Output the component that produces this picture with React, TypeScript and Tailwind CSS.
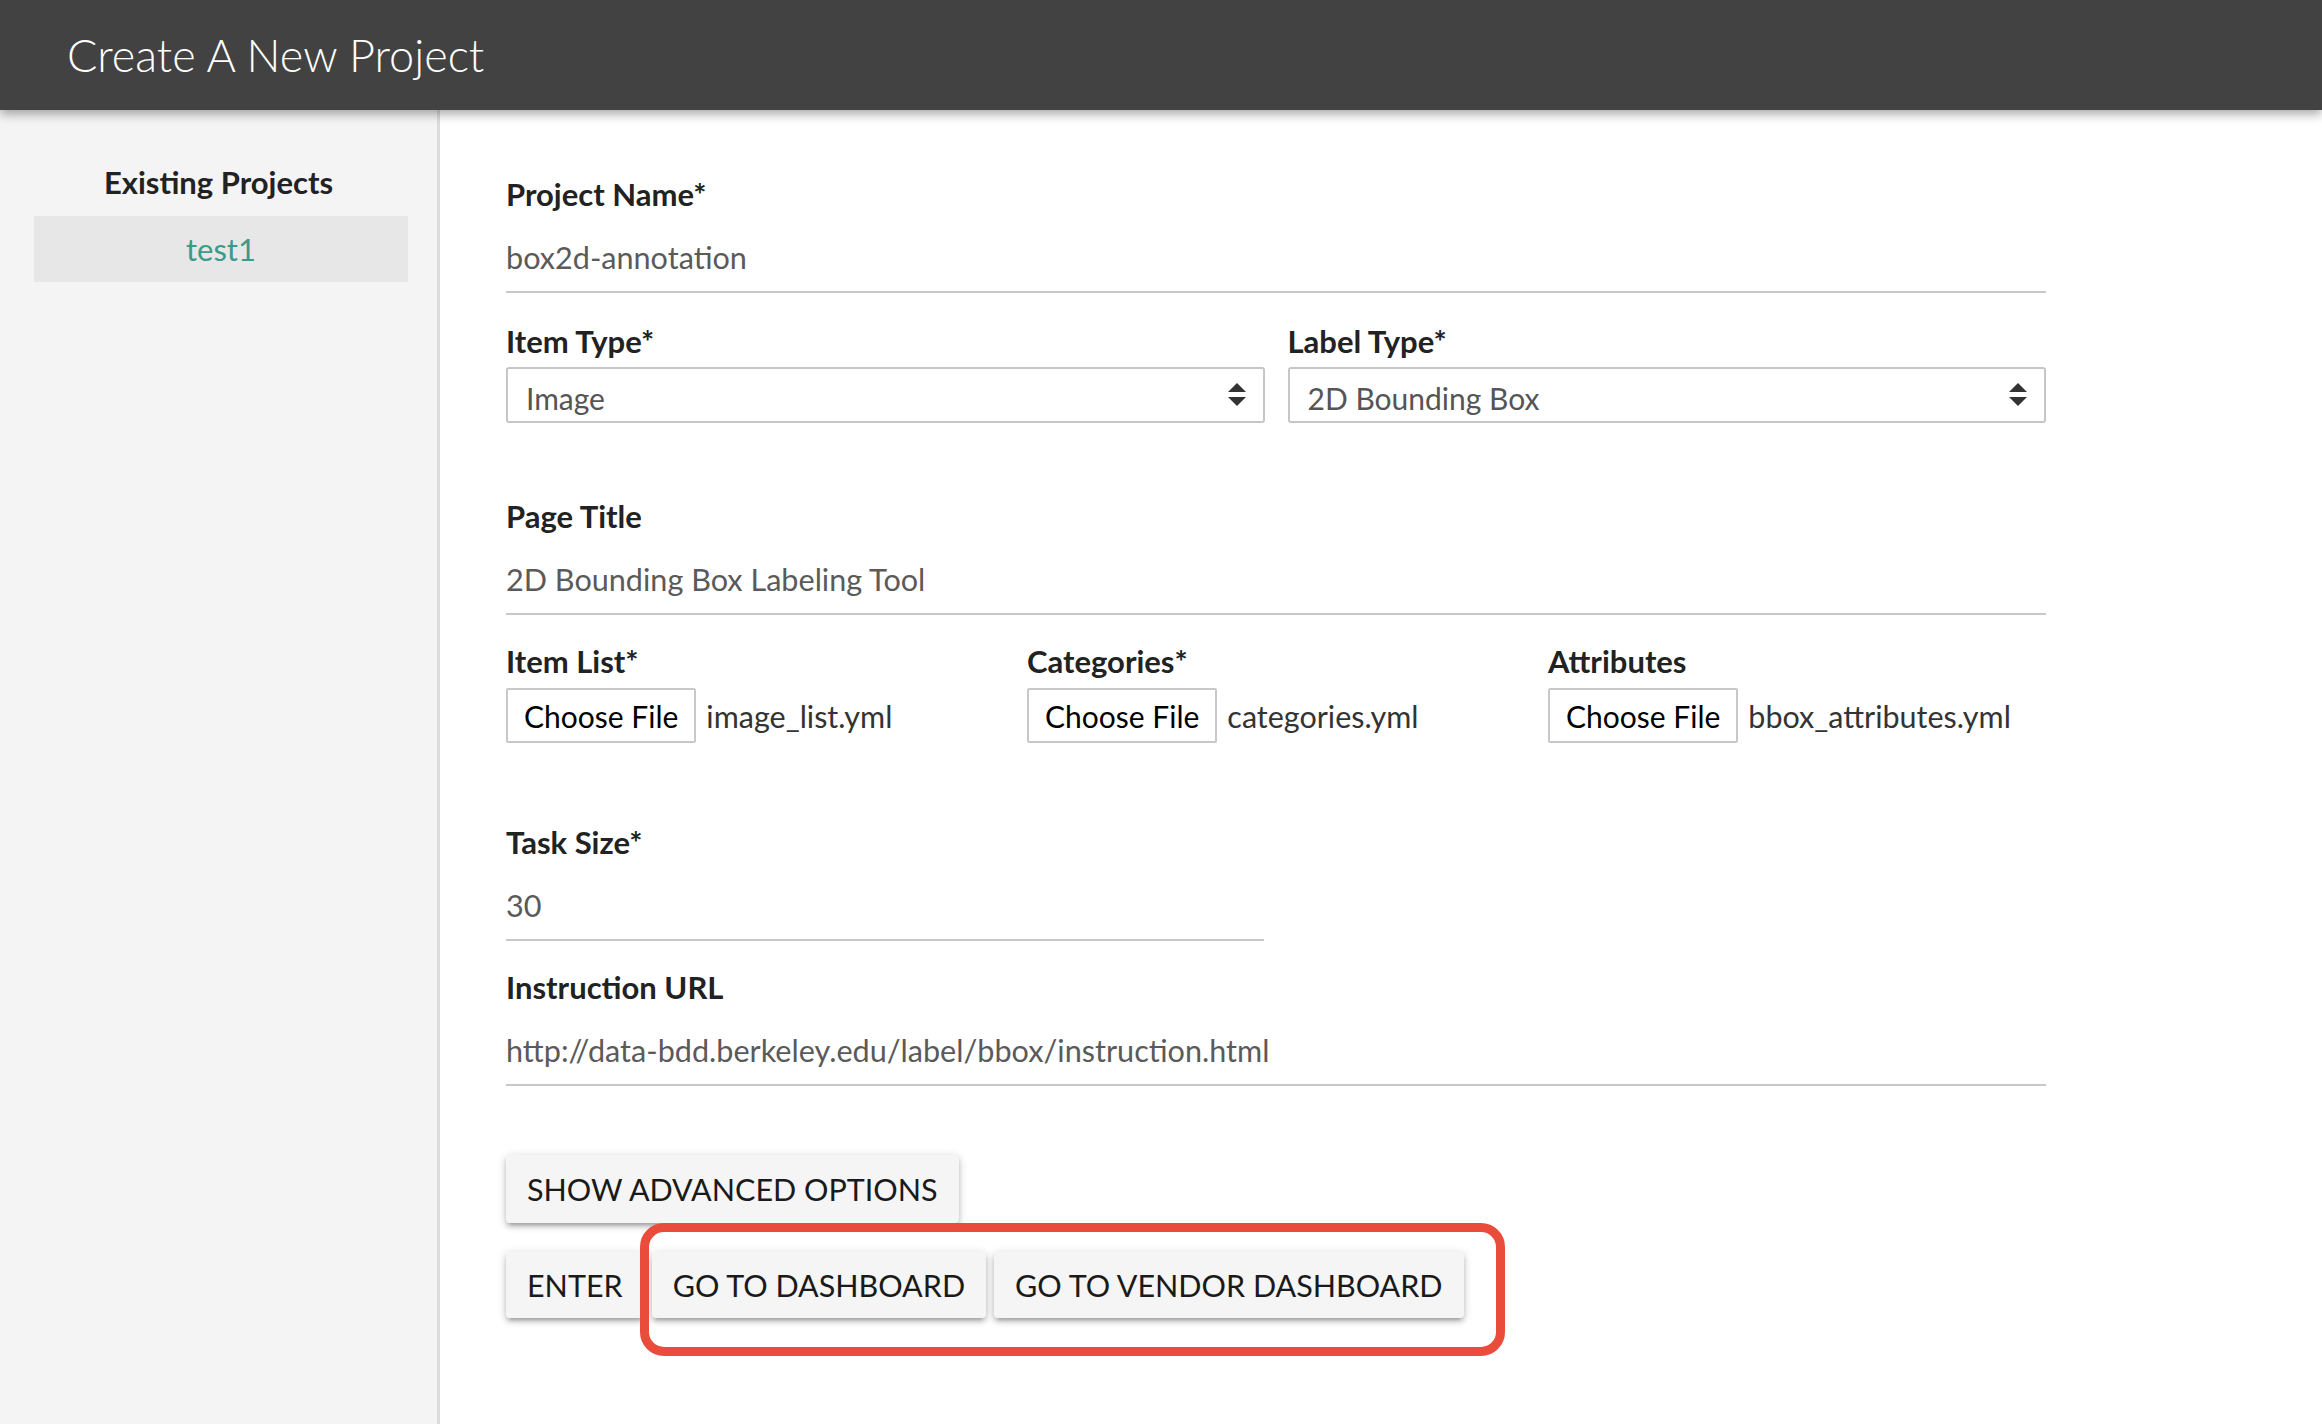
import React from 'react';

const labelCls = 'block text-[31px] leading-[34px] font-bold text-[#222]';

function TextField({ label, value, className = '' }: { label: string; value: string; className?: string }) {
  return (
    <div className={className}>
      <label className={labelCls}>{label}</label>
      <input
        readOnly
        value={value}
        className="mt-[22px] block h-[60px] w-full border-b-2 border-[#c8c8c8] bg-transparent pb-[9px] text-[30.6px] leading-[38px] text-[#5a5a5a] outline-none"
      />
    </div>
  );
}

function SelectBox({ label, value }: { label: string; value: string }) {
  return (
    <div>
      <label className={labelCls}>{label}</label>
      <div className="mt-[9px] flex h-[56px] items-center justify-between rounded-[3px] border-2 border-[#c6c6c6] bg-white pl-[18px] pr-[17px] pt-[6px]">
        <span className="text-[30px] leading-[38px] text-[#555]">{value}</span>
        <svg width="18" height="24" viewBox="0 0 18 24" className="-mt-[6px]">
          <polygon points="9,0 18,9 0,9" fill="#333" />
          <polygon points="0,14 18,14 9,23" fill="#333" />
        </svg>
      </div>
    </div>
  );
}

function FileField({ label, file }: { label: string; file: string }) {
  return (
    <div>
      <label className={labelCls}>{label}</label>
      <div className="mt-[10px] flex items-center gap-[10px]">
        <button className="h-[55px] rounded-[2px] border-2 border-[#c8c8c8] bg-white px-[16px] text-[30px] leading-[36px] text-black">
          Choose File
        </button>
        <span className="text-[30.5px] leading-[36px] text-[#333]">{file}</span>
      </div>
    </div>
  );
}

const btnCls =
  'rounded-[4px] bg-[#f5f5f5] px-[21px] text-[30.5px] uppercase leading-[36px] text-[#1a1a1a] shadow-[0_4px_4px_rgba(0,0,0,0.14),0_6px_2px_-4px_rgba(0,0,0,0.12),0_2px_10px_rgba(0,0,0,0.2)]';

export default function App() {
  return (
    <div className="flex min-h-screen flex-col bg-white font-['Lato','Liberation_Sans',sans-serif]">
      <header className="relative z-10 flex h-[110px] items-center bg-[#424242] pl-[67px] pt-[2px] shadow-[0_4px_10px_rgba(0,0,0,0.35)]">
        <h1 className="text-[45px] font-light text-white">Create A New Project</h1>
      </header>

      <div className="flex flex-1">
        {/* Sidebar */}
        <aside className="w-[440px] border-r-[3px] border-[#dcdcdc] bg-[#f4f4f4] pt-[55px]">
          <h2 className="text-center text-[31px] leading-[34px] font-bold text-[#222]">Existing Projects</h2>
          <div className="ml-[34px] mt-[17px] flex h-[66px] w-[374px] items-center justify-center bg-[#e7e7e7]">
            <span className="text-[31px] leading-[36px] text-[#3b9a89]">test1</span>
          </div>
        </aside>

        {/* Form */}
        <main className="flex-1 pl-[66px] pt-[67px]">
          <div className="w-[1540px]">
            <TextField label="Project Name*" value="box2d-annotation" />

            <div className="mt-[31px] grid grid-cols-2 gap-x-[23px]">
              <SelectBox label="Item Type*" value="Image" />
              <SelectBox label="Label Type*" value="2D Bounding Box" />
            </div>

            <TextField className="mt-[76px]" label="Page Title" value="2D Bounding Box Labeling Tool" />

            <div className="mt-[29px] grid grid-cols-3 gap-x-[23px]">
              <FileField label="Item List*" file="image_list.yml" />
              <FileField label="Categories*" file="categories.yml" />
              <FileField label="Attributes" file="bbox_attributes.yml" />
            </div>

            <TextField className="mt-[82px] w-[758px]" label="Task Size*" value="30" />

            <TextField
              className="mt-[29px]"
              label="Instruction URL"
              value="http://data-bdd.berkeley.edu/label/bbox/instruction.html"
            />

            <div className="mt-[69px]">
              <button className={`${btnCls} h-[68px]`}>Show Advanced Options</button>
            </div>

            <div className="relative mt-[29px] flex gap-[8px]">
              <button className={`${btnCls} h-[66px]`}>Enter</button>
              <button className={`${btnCls} h-[66px]`}>Go to Dashboard</button>
              <button className={`${btnCls} h-[66px]`}>Go to Vendor Dashboard</button>
              {/* annotation highlight */}
              <div className="pointer-events-none absolute left-[134px] top-[-29px] h-[133px] w-[865px] rounded-[24px] border-[9px] border-[#ea4c3c]" />
            </div>
          </div>
        </main>
      </div>
    </div>
  );
}
